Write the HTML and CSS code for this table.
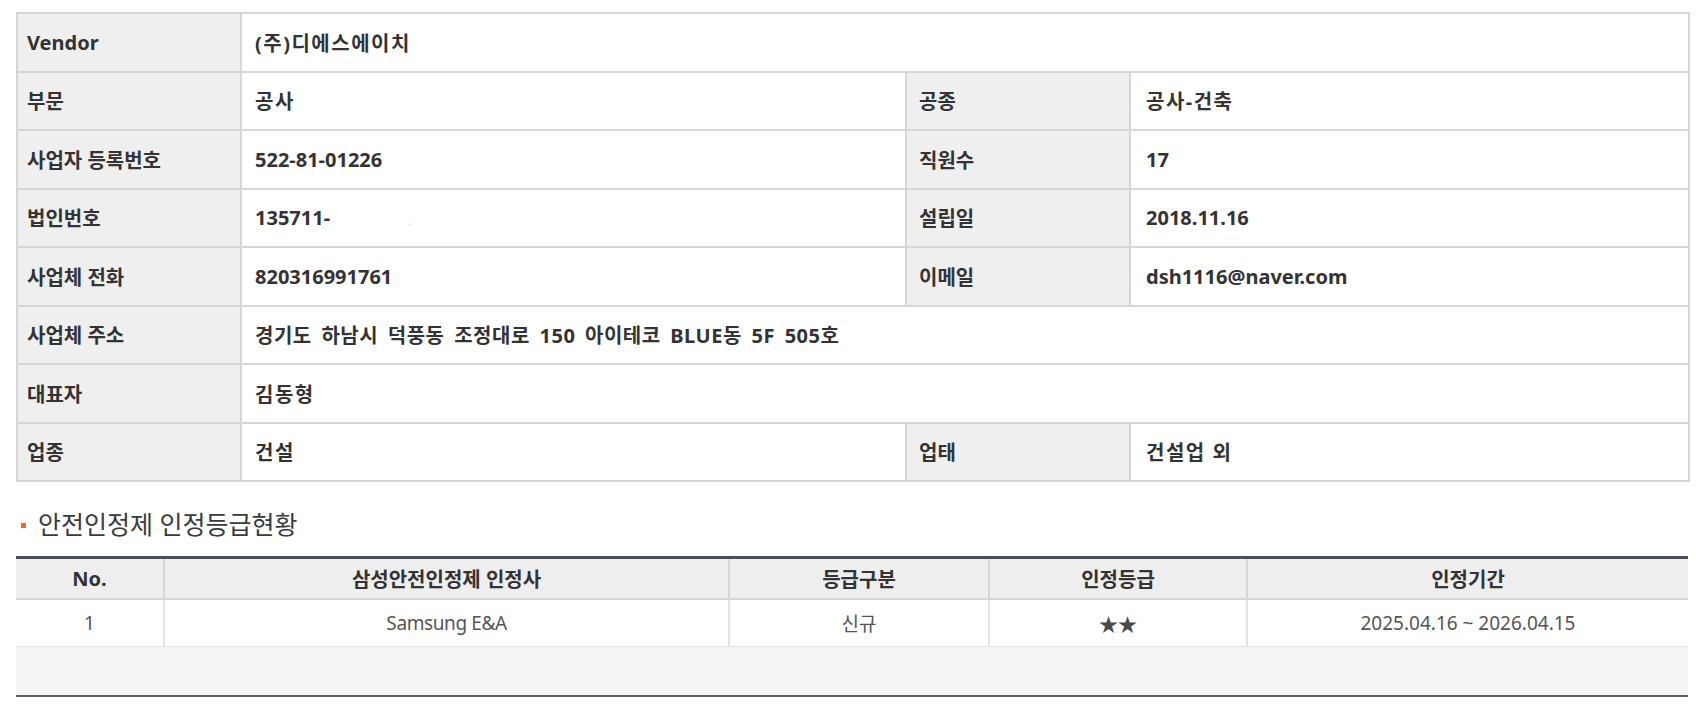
FILE: index.html
```html
<!DOCTYPE html>
<html lang="ko">
<head>
<meta charset="utf-8">
<title>Vendor</title>
<link rel="stylesheet" href="styles.css">
</head>
<body>
<div class="page">
  <table class="info">
    <colgroup>
      <col class="c-lbl1"><col class="c-val1"><col class="c-lbl2"><col class="c-val2">
    </colgroup>
    <tbody>
      <tr><th>Vendor</th><td colspan="3" class="ko">(주)디에스에이치</td></tr>
      <tr><th>부문</th><td class="ko">공사</td><th class="lbl2">공종</th><td class="val2 ko">공사-건축</td></tr>
      <tr><th>사업자 등록번호</th><td>522-81-01226</td><th class="lbl2">직원수</th><td class="val2">17</td></tr>
      <tr><th>법인번호</th><td>135711-<span class="mask">.</span></td><th class="lbl2">설립일</th><td class="val2">2018.11.16</td></tr>
      <tr><th>사업체 전화</th><td>820316991761</td><th class="lbl2">이메일</th><td class="val2">dsh1116@naver.com</td></tr>
      <tr><th>사업체 주소</th><td colspan="3" class="addr">경기도 하남시 덕풍동 조정대로 150 아이테코 BLUE동 5F 505호</td></tr>
      <tr><th>대표자</th><td colspan="3" class="ko">김동형</td></tr>
      <tr><th>업종</th><td class="ko">건설</td><th class="lbl2">업태</th><td class="val2 ko">건설업 외</td></tr>
    </tbody>
  </table>

  <h2 class="sec-title"><span class="bullet"></span>안전인정제 인정등급현황</h2>

  <table class="grade">
    <colgroup>
      <col class="g1"><col class="g2"><col class="g3"><col class="g4"><col class="g5">
    </colgroup>
    <thead>
      <tr><th>No.</th><th>삼성안전인정제 인정사</th><th>등급구분</th><th>인정등급</th><th>인정기간</th></tr>
    </thead>
    <tbody>
      <tr><td>1</td><td class="latin">Samsung E&amp;A</td><td>신규</td><td class="stars">★★</td><td>2025.04.16 ~ 2026.04.15</td></tr>
    </tbody>
    <tfoot>
      <tr><td colspan="5"></td></tr>
    </tfoot>
  </table>
</div>
</body>
</html>
```

FILE: styles.css
```css
html, body {
  margin: 0;
  padding: 0;
  background: #ffffff;
}

body {
  font-family: "Noto Sans", "Noto Sans CJK KR", sans-serif;
  color: #333333;
}

.page {
  padding: 12px 10px 0 16px;
}

.info {
  width: 1672px;
  border-collapse: collapse;
  table-layout: fixed;
  border: 2px solid #d6d6d6;
}

.c-lbl1 { width: 224px; }
.c-val1 { width: 665px; }
.c-lbl2 { width: 224px; }
.c-val2 { width: 559px; }

.info tr {
  height: 58.5px;
}

.info th,
.info td {
  border: 2px solid #d6d6d6;
  font-size: 20px;
  font-weight: 700;
  color: #333333;
  text-align: left;
  vertical-align: middle;
  padding: 0 0 0 13px;
  white-space: nowrap;
}

.info th {
  background: #efefef;
  padding-left: 9px;
}

.info td {
  background: #ffffff;
}

.info th.lbl2 {
  padding-left: 12px;
}

.info td.val2 {
  padding-left: 15px;
}

.info td.ko {
  letter-spacing: 1.5px;
}

.info td.addr {
  letter-spacing: 0.5px;
  word-spacing: 4px;
}

.mask {
  color: #c8d4e8;
  font-size: 8px;
  margin-left: 78px;
}

.sec-title {
  display: flex;
  align-items: center;
  gap: 12px;
  margin: 27px 0 17px 5px;
  font-size: 25px;
  line-height: 30px;
  font-weight: 400;
  color: #3a3a3a;
}

.bullet {
  display: block;
  width: 5px;
  height: 5px;
  background: #f26522;
  margin-top: 3px;
}

.grade {
  width: 1672px;
  border-collapse: collapse;
  table-layout: fixed;
  border-top: 3px solid #4b4e56;
  border-bottom: 2px solid #5e6066;
}

.g1 { width: 148px; }
.g2 { width: 565px; }
.g3 { width: 260px; }
.g4 { width: 258px; }
.g5 { width: 441px; }

.grade thead th {
  height: 39px;
  background: #eeeeee;
  font-size: 20px;
  font-weight: 700;
  color: #333333;
  text-align: center;
  vertical-align: middle;
  padding: 0;
  border-left: 2px solid #d5d5d5;
  border-bottom: 2px solid #d5d5d5;
}

.grade thead th:first-child {
  border-left: none;
}

.grade tbody td {
  height: 46px;
  background: #ffffff;
  font-size: 19px;
  font-weight: 400;
  color: #555555;
  text-align: center;
  vertical-align: middle;
  padding: 0;
  border-left: 2px solid #e4e4e4;
  border-bottom: 1px solid #e4e4e4;
}

.grade tbody td:first-child {
  border-left: none;
}

.grade tbody td.latin {
  letter-spacing: -0.4px;
}

.grade tbody td.stars {
  font-family: "Noto Sans CJK KR", sans-serif;
  font-size: 19px;
  color: #4a4a4a;
}

.grade tfoot td {
  height: 48px;
  background: #f5f5f5;
  padding: 0;
}
```
